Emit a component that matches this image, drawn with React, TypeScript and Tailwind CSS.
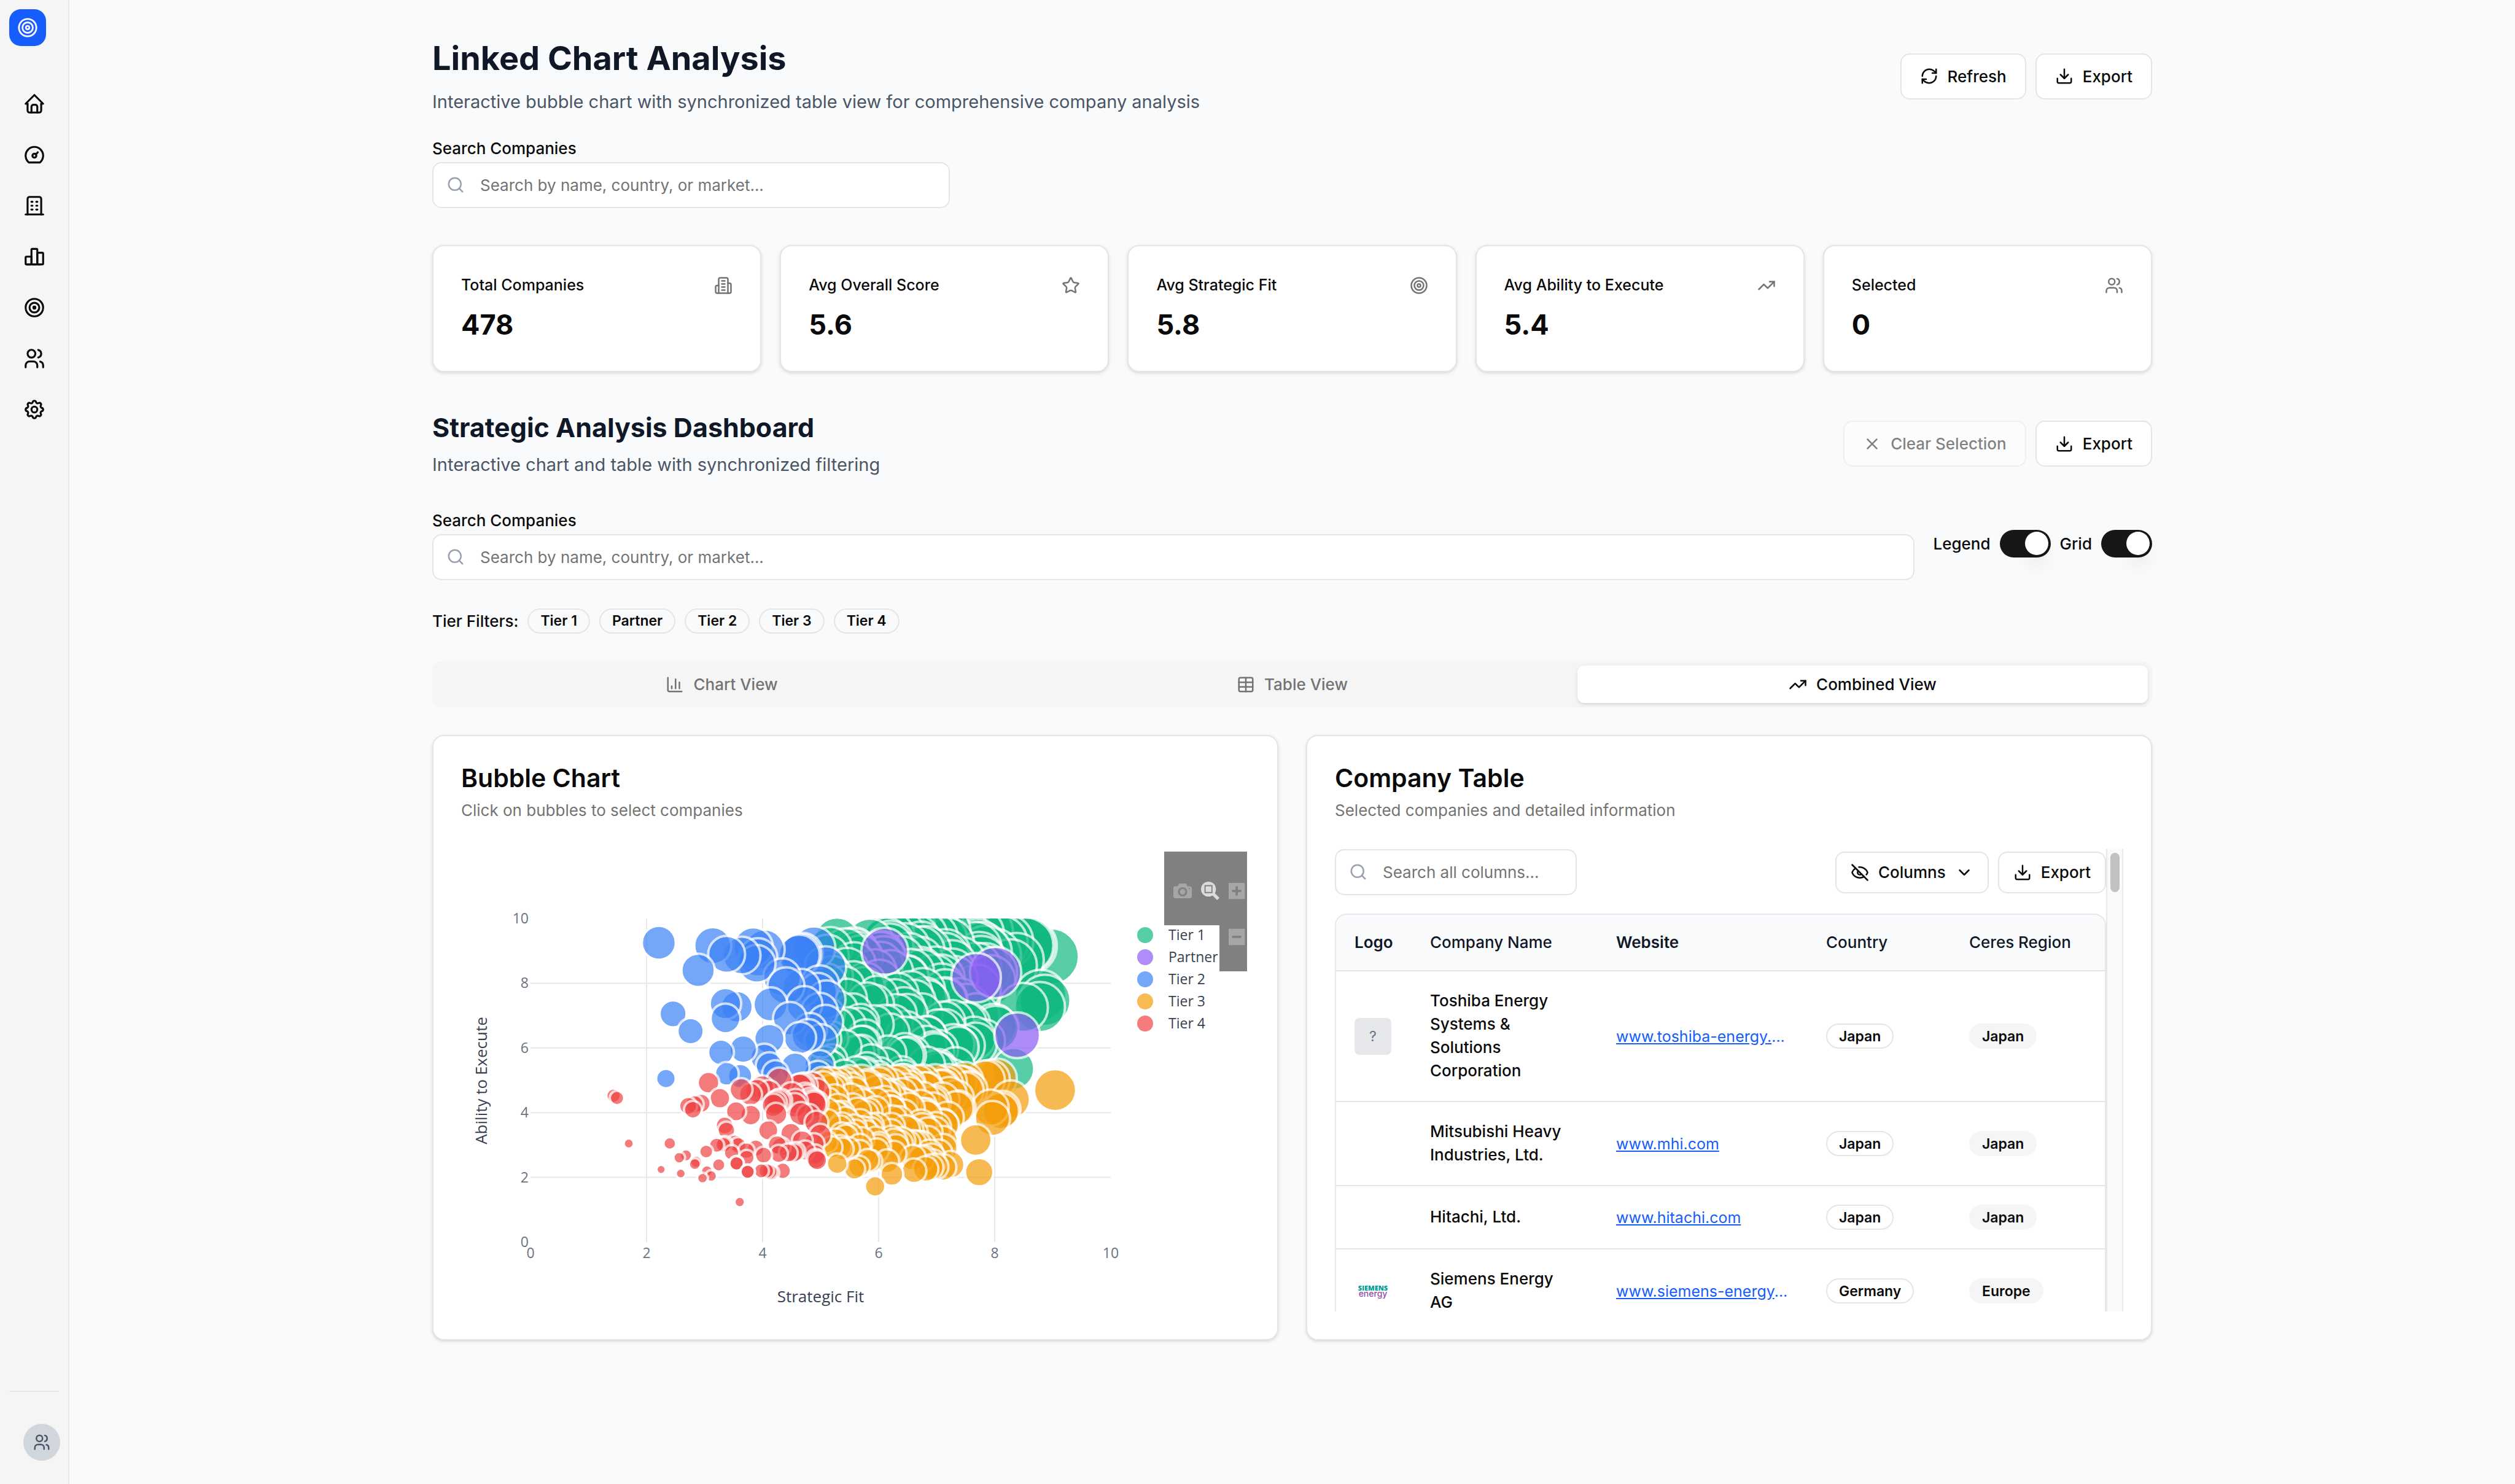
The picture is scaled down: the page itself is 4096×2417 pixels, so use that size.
import React from "react";
import {
  ChartColumn,
  ChevronDown,
  Download,
  EyeOff,
  RefreshCw,
  Search,
  Star,
  Table,
  Target,
  TrendingUp,
  Users,
  X,
} from "lucide-react";
import { TbBuilding, TbChartBar, TbDashboard, TbHome, TbSettings, TbTarget, TbUsers } from "react-icons/tb";

const NAV = [
  { label: "Home", Icon: TbHome },
  { label: "Dashboard", Icon: TbDashboard },
  { label: "Companies", Icon: TbBuilding },
  { label: "Reports", Icon: TbChartBar },
  { label: "Targets", Icon: TbTarget },
  { label: "Team", Icon: TbUsers },
  { label: "Settings", Icon: TbSettings },
];

function Sidebar() {
  return (
    <aside className="sticky top-0 flex h-screen w-[113px] shrink-0 flex-col border-r-2 border-[#e5e7eb] bg-[#f5f5f5] px-[15px] pt-[15px] pb-[38px]">
      <a href="#home" aria-label="Strategy workspace" className="flex size-[60px] items-center justify-center rounded-[19px] bg-[#155dfc] text-white">
        <Target size={34} />
      </a>
      <nav className="mt-[75px] flex flex-col gap-[45px] pl-[22px]">
        {NAV.map(({ label, Icon }) => (
          <a key={label} href={"#" + label.toLowerCase()} aria-label={label} className="flex size-[38px] text-[#0a0a0a]">
            <Icon size={38} />
          </a>
        ))}
      </nav>
      <div className="mt-auto border-t-2 border-[#e5e7eb] pt-[52px] pl-[23px]">
        <button type="button" aria-label="Account" className="flex size-[60px] items-center justify-center rounded-full bg-[#d1d5dc] text-[#4a5565]">
          <TbUsers size={30} />
        </button>
      </div>
    </aside>
  );
}

function OutlineButton({ children, small, disabled }: { children: React.ReactNode; small?: boolean; disabled?: boolean }) {
  return (
    <button
      type="button"
      disabled={disabled}
      className={
        (small ? "h-[68px] px-[23px] " : "h-[75px] px-[30px] ") +
        (disabled ? "opacity-50 " : "") +
        "flex items-center gap-[15px] rounded-[15px] border-2 border-[#e5e5e5] bg-white text-[26px] font-medium whitespace-nowrap text-[#0a0a0a]"
      }
    >
      {children}
    </button>
  );
}

function SearchInput({ id, placeholder, label }: { id: string; placeholder: string; label?: string }) {
  return (
    <div className="relative">
      <Search size={30} className="absolute top-[22px] left-[23px] text-[#99a1af]" />
      <input
        id={id}
        type="text"
        aria-label={label}
        placeholder={placeholder}
        className="h-[75px] w-full rounded-[15px] border-2 border-[#e5e5e5] bg-white pr-[23px] pl-[76px] text-[26px] text-[#0a0a0a] placeholder:text-[#737373]"
      />
    </div>
  );
}

function SearchField({ id, label, placeholder }: { id: string; label: string; placeholder: string }) {
  return (
    <div className="w-full">
      <label htmlFor={id} className="block text-[26px] leading-[45px] font-medium text-[#0a0a0a]">
        {label}
      </label>
      <SearchInput id={id} placeholder={placeholder} />
    </div>
  );
}

const CARD = "rounded-[19px] border-2 border-[#e5e5e5] bg-white shadow-[0_2px_6px_rgba(0,0,0,0.1),0_2px_4px_-2px_rgba(0,0,0,0.1)]";

function OfficeIcon({ size, className }: { size: number; className?: string }) {
  return (
    <svg
      width={size}
      height={size}
      viewBox="0 0 24 24"
      fill="none"
      stroke="currentColor"
      strokeWidth="2"
      strokeLinecap="round"
      strokeLinejoin="round"
      className={className}
      aria-hidden="true"
    >
      <path d="M6 22V4a2 2 0 0 1 2-2h8a2 2 0 0 1 2 2v18Z" />
      <path d="M6 12H4a2 2 0 0 0-2 2v6a2 2 0 0 0 2 2h2" />
      <path d="M18 9h2a2 2 0 0 1 2 2v9a2 2 0 0 1-2 2h-2" />
      <path d="M10 6h4M10 10h4M10 14h4M10 18h4" />
    </svg>
  );
}

const STATS = [
  { label: "Total Companies", value: "478", Icon: OfficeIcon },
  { label: "Avg Overall Score", value: "5.6", Icon: Star },
  { label: "Avg Strategic Fit", value: "5.8", Icon: Target },
  { label: "Avg Ability to Execute", value: "5.4", Icon: TrendingUp },
  { label: "Selected", value: "0", Icon: Users },
];

function Switch({ id, label }: { id: string; label: string }) {
  return (
    <div className="flex items-center gap-[15px]">
      <label htmlFor={id} className="text-[26px] font-medium text-[#0a0a0a]">
        {label}
      </label>
      <input
        id={id}
        type="checkbox"
        role="switch"
        defaultChecked
        className="flex h-[45px] w-[83px] appearance-none items-center justify-end rounded-full bg-[#171717] px-[4px] after:size-[38px] after:rounded-full after:bg-white after:shadow-[0_19px_28px_-6px_rgba(0,0,0,0.1),0_8px_11px_-8px_rgba(0,0,0,0.1)] after:content-['']"
      />
    </div>
  );
}

/* ---------- Bubble chart ---------- */

type Point = { x: number; y: number };

const UNIT = 1 / 3;
const SCALE = 16 / 17;
const PLOT = { left: 113, top: 113, width: 945, height: 527 };
const px = (fit: number) => PLOT.left + (fit / 10) * PLOT.width;
const py = (ability: number) => PLOT.top + PLOT.height - (ability / 10) * PLOT.height;

function scores(offset: number, list: string): Point[] {
  return list
    .trim()
    .split(/\s+/)
    .map((pair) => {
      const [a, b] = pair.split(",").map(Number);
      return { x: ((a + offset) * UNIT) / 100.4, y: 10 - ((b - 30) * UNIT) / 56 };
    });
}

function random(seed: number) {
  let a = seed;
  return () => {
    a = (a + 0x6d2b79f5) | 0;
    let t = Math.imul(a ^ (a >>> 15), 1 | a);
    t = (t + Math.imul(t ^ (t >>> 7), 61 | t)) ^ t;
    return ((t ^ (t >>> 14)) >>> 0) / 4294967296;
  };
}

// Bands: [yFrom, yTo, xFrom, xTo, count]
function spread(seed: number, bands: number[][]): string {
  const next = random(seed);
  const out: string[] = [];
  bands.forEach(([y0, y1, x0, x1, count]) => {
    for (let i = 0; i < count; i++) {
      const slot = Math.min(Math.max((i - 0.4 + next() * 1.8) / count, 0), 1);
      const x = x0 + slot * (x1 - x0);
      const y = y0 + next() * (y1 - y0);
      out.push(Math.round(x) + "," + Math.round(y));
    }
  });
  return out.join(" ");
}

const EAST = 1386;
const WEST = 336;

const TIER_1 = scores(
  EAST,
  `205,142 375,152 170,188 300,200 310,215 1314,227 1200,172 1190,168 1182,170 1138,245 1105,275 975,205 930,170 975,100 1080,150
   460,150 480,120 610,140 640,175 560,180 700,130 1284,455 1258,490 1172,492 1262,430 1120,810 1030,600 965,665 925,680 865,690 835,698
   560,742 735,820 730,805 320,590 400,580 660,450 670,640 345,840 350,832 720,300 1000,350 560,640 1020,590`,
).concat(
  scores(
    EAST,
    spread(11, [
      [20, 110, 500, 1120, 13],
      [110, 200, 420, 1080, 12],
      [190, 260, 150, 1040, 17],
      [260, 340, 150, 1010, 17],
      [340, 430, 150, 930, 15],
      [430, 520, 170, 900, 14],
      [520, 600, 150, 990, 14],
      [600, 690, 140, 940, 14],
      [690, 780, 140, 840, 14],
      [780, 860, 130, 850, 15],
    ]),
  ),
);

const PARTNER = scores(EAST, "453,200 1028,310 927,337 1140,636");

const TIER_2 = scores(
  WEST,
  `330,156 610,171 534,299 820,178 880,190 760,222 845,232 838,265 682,216 1135,182 1075,212 1066,216 1058,221 1195,282
   970,335 990,380 1070,390 1165,375 1155,412 1085,475 910,476 1165,510 1010,550 735,488 676,472 676,549 404,525 495,615
   1115,608 1105,638 1063,650 1172,665 904,655 768,708 653,725 878,752 904,795 936,835 1038,800 1165,792 1155,845 367,861
   683,836 752,848 1200,450 1195,570`,
);

const TIER_3 = scores(
  EAST,
  `1337,921 1107,970 1062,1020 1055,1030 1002,1012 1012,1068 925,1180 943,1347 403,1421 490,1358 605,1340 665,1330 690,1322 715,1318
   755,1322 795,1308 296,1330 320,1318 380,1290 365,1285 206,1303 835,1012 825,1015 1035,860 1000,865 975,868 565,920 575,905 380,1110
   285,1010 250,1075 190,910 170,915 300,1140 410,1235 530,1200 465,1290 500,1250`,
).concat(
  scores(
    EAST,
    spread(29, [
      [870, 900, 130, 900, 22],
      [895, 950, 130, 940, 20],
      [950, 1010, 130, 830, 18],
      [1010, 1070, 130, 790, 17],
      [1070, 1130, 130, 790, 17],
      [1130, 1190, 130, 780, 17],
      [1190, 1250, 130, 780, 16],
      [1250, 1310, 570, 780, 6],
    ]),
  ),
);

const TIER_4 = scores(
  WEST,
  `588,882 956,872 865,907 757,918 840,925 900,932 806,943 647,963 95,950 113,962 550,989 482,1003 515,995 507,1023 731,1031 807,1051
   1060,905 1085,900 1070,903 1125,897 1150,930 1020,945 1040,980 1100,960 1090,950 960,975 950,980 935,988 925,1000 1130,985 1145,990
   1135,995 1035,1000 1120,975 939,1045 1068,1045 1107,1055 1148,1090 672,1104 681,1130 898,1130 1016,1146 1075,1185 1168,1155 174,1198
   387,1198 471,1260 436,1272 524,1293 517,1305 576,1240 630,1207 665,1205 672,1200 725,1195 742,1208 708,1246 785,1235 786,1272
   833,1222 874,1259 641,1309 733,1300 734,1302 342,1333 444,1354 580,1342 602,1367 557,1378 791,1345 792,1344 862,1340 888,1340
   905,1345 915,1350 973,1340 750,1502 945,1205 965,1215 953,1252 1002,1247 1030,1247 1040,1240 1090,1235 1135,1200 1140,1255
   1152,1285 1145,1278`,
);

const TIERS = [
  { name: "Tier 1", color: "#10b981", points: TIER_1 },
  { name: "Partner", color: "#8b5cf6", points: PARTNER },
  { name: "Tier 2", color: "#3b82f6", points: TIER_2 },
  { name: "Tier 3", color: "#f59e0b", points: TIER_3 },
  { name: "Tier 4", color: "#ef4444", points: TIER_4 },
];

const bubbleRadius = (p: Point) => ((9.2 * (p.x + p.y) - 23) * UNIT + 2) * SCALE;

const CAMERA =
  "m500 450c-83 0-150-67-150-150 0-83 67-150 150-150 83 0 150 67 150 150 0 83-67 150-150 150z m400 150h-120c-16 0-34 13-39 29l-31 93c-6 15-23 28-40 28h-340c-16 0-34-13-39-28l-31-94c-6-15-23-28-40-28h-120c-55 0-100-45-100-100v-450c0-55 45-100 100-100h800c55 0 100 45 100 100v450c0 55-45 100-100 100z m-400-550c-138 0-250 112-250 250 0 138 112 250 250 250 138 0 250-112 250-250 0-138-112-250-250-250z m365 380c-19 0-35 16-35 35 0 19 16 35 35 35 19 0 35-16 35-35 0-19-16-35-35-35z";
const ZOOM_BOX =
  "m1000-25l-250 251c40 63 63 138 63 218 0 224-182 406-407 406-224 0-406-182-406-406s183-406 407-406c80 0 155 22 218 62l250-250 125 125z m-812 250l0 438 437 0 0-438-437 0z m62 375l313 0 0-312-313 0 0 312z";
const ZOOM_IN =
  "m1 787l0-875 875 0 0 875-875 0z m687-500l-187 0 0-187-125 0 0 187-188 0 0 125 188 0 0 187 125 0 0-187 187 0 0-125z";
const ZOOM_OUT = "m0 788l0-876 876 0 0 876-876 0z m688-500l-500 0 0 125 500 0 0-125z";

function ModeButton({ label, path, active }: { label: string; path: string; active?: boolean }) {
  return (
    <button type="button" aria-label={label} className="w-[45px] pl-[15px]">
      <svg viewBox="0 0 1000 1000" className="size-[30px]">
        <path d={path} transform="matrix(1 0 0 -1 0 850)" fill={active ? "#dcdcdc" : "#a6a6a6"} />
      </svg>
    </button>
  );
}

function BubbleChart() {
  const ticks = [0, 2, 4, 6, 8, 10];
  return (
    <div className="relative font-['Open_Sans',sans-serif]">
      <svg viewBox="0 0 1284 753" className="block w-full" role="img" aria-label="Strategic fit against ability to execute">
        <defs>
          <clipPath id="plot-area">
            <rect x={PLOT.left} y={PLOT.top} width={PLOT.width} height={PLOT.height} />
          </clipPath>
        </defs>
        <g stroke="#e5e7eb" strokeWidth="2">
          {[2, 4, 6, 8].map((t) => (
            <g key={t}>
              <line x1={px(t)} x2={px(t)} y1={PLOT.top} y2={PLOT.top + PLOT.height} />
              <line x1={PLOT.left} x2={PLOT.left + PLOT.width} y1={py(t)} y2={py(t)} />
            </g>
          ))}
        </g>
        <g clipPath="url(#plot-area)" stroke="#ffffff" strokeWidth="4">
          {TIERS.map((tier) => (
            <g key={tier.name} fill={tier.color}>
              {[...tier.points]
                .sort((a, b) => b.x + b.y - a.x - a.y)
                .map((p, i) => (
                  <circle key={i} cx={px(p.x)} cy={py(p.y)} r={bubbleRadius(p)} opacity="0.7" />
                ))}
            </g>
          ))}
        </g>
        <g fill="#6b7280" fontSize="23">
          {ticks.map((t) => (
            <text key={"y" + t} x={PLOT.left - 3} y={py(t) + 8} textAnchor="end">
              {t}
            </text>
          ))}
          {ticks.map((t) => (
            <text key={"x" + t} x={px(t)} y={666} textAnchor="middle">
              {t}
            </text>
          ))}
        </g>
        <g fill="#374151" fontSize="26" textAnchor="middle">
          <text x={PLOT.left + PLOT.width / 2} y={738}>
            Strategic Fit
          </text>
          <text transform="translate(42 377) rotate(-90)">Ability to Execute</text>
        </g>
        <g fontSize="23">
          {TIERS.map((tier, i) => (
            <g key={tier.name}>
              <circle cx={1114} cy={140 + i * 36} r={13} fill={tier.color} opacity="0.7" />
              <text x={1152} y={148 + i * 36} fill="#374151">
                {tier.name}
              </text>
            </g>
          ))}
        </g>
      </svg>
      <div className="absolute top-[4px] right-[4px] flex flex-col items-end" role="toolbar" aria-label="Chart tools">
        <div className="flex h-[120px] items-center bg-[#808080] pt-[8px]">
          <ModeButton label="Download plot" path={CAMERA} />
          <ModeButton label="Zoom" path={ZOOM_BOX} active />
          <ModeButton label="Zoom in" path={ZOOM_IN} />
        </div>
        <div className="h-[75px] bg-[#808080] pt-[4px]">
          <ModeButton label="Zoom out" path={ZOOM_OUT} />
        </div>
      </div>
    </div>
  );
}

/* ---------- Company table ---------- */

const COMPANIES = [
  { name: "Toshiba Energy Systems & Solutions Corporation", site: "www.toshiba-energy.", cut: true, country: "Japan", region: "Japan", logo: "unknown" },
  { name: "Mitsubishi Heavy Industries, Ltd.", site: "www.mhi.com", cut: false, country: "Japan", region: "Japan", logo: "" },
  { name: "Hitachi, Ltd.", site: "www.hitachi.com", cut: false, country: "Japan", region: "Japan", logo: "" },
  { name: "Siemens Energy AG", site: "www.siemens-energy", cut: true, country: "Germany", region: "Europe", logo: "siemens" },
];

function Logo({ kind }: { kind: string }) {
  if (kind === "unknown") {
    return <div className="flex size-[60px] items-center justify-center rounded-[8px] bg-[#e5e7eb] text-[23px] text-[#6a7282]">?</div>;
  }
  if (kind === "siemens") {
    return (
      <svg viewBox="0 0 60 30" className="block h-[30px] w-[60px]">
        <text x="30" y="14" textAnchor="middle" fontFamily="Open Sans" fontWeight="800" fontSize="11" fill="#009999">
          SIEMENS
        </text>
        <text x="30" y="24" textAnchor="middle" fontFamily="Inter" fontWeight="500" fontSize="14" fill="#8a4fa8">
          energy
        </text>
      </svg>
    );
  }
  return null;
}

const BADGE = "inline-flex h-[41px] items-center rounded-full border-2 px-[19px] text-[23px] font-semibold whitespace-nowrap text-[#0a0a0a]";

function CompanyTable() {
  return (
    <div className="flex h-[753px] overflow-hidden">
      <div className="min-w-0 flex-1">
        <div className="flex h-[75px] items-center justify-between">
          <div className="w-[394px]">
            <SearchInput id="table-search" label="Search all columns" placeholder="Search all columns..." />
          </div>
          <div className="flex gap-[15px]">
            <OutlineButton small>
              <EyeOff size={30} />
              Columns
              <ChevronDown size={30} />
            </OutlineButton>
            <OutlineButton small>
              <Download size={30} />
              Export
            </OutlineButton>
          </div>
        </div>
        <div className="mt-[30px] overflow-hidden rounded-[19px] border-2 border-[#e5e7eb]">
          <table className="w-full table-fixed text-left text-[26px] leading-[38px] text-[#0a0a0a]">
            <colgroup>
              <col className="w-[123px]" />
              <col className="w-[303px]" />
              <col className="w-[342px]" />
              <col className="w-[233px]" />
              <col />
            </colgroup>
            <thead>
              <tr className="h-[91px] border-b-2 border-[#e5e5e5] bg-[#f9fafb] text-[#101828]">
                <th className="px-[30px] font-semibold">Logo</th>
                <th className="px-[30px] font-medium">Company Name</th>
                <th className="px-[30px] font-semibold">Website</th>
                <th className="px-[30px] font-medium">Country</th>
                <th className="px-[30px] font-medium whitespace-nowrap">Ceres Region</th>
              </tr>
            </thead>
            <tbody>
              {COMPANIES.map((c) => (
                <tr key={c.name} className="border-b-2 border-[#e5e5e5]">
                  <td className="px-[30px]">
                    <Logo kind={c.logo} />
                  </td>
                  <td className="px-[30px] pt-[29px] pb-[30px] font-medium">{c.name}</td>
                  <td className="px-[30px] text-[25px] whitespace-nowrap text-[#155dfc]">
                    <a href={"https://" + c.site} className="underline">
                      {c.site}
                    </a>
                    {c.cut ? "..." : null}
                  </td>
                  <td className="px-[30px] align-middle">
                    <div className="flex">
                      <span className={BADGE + " border-[#e5e5e5]"}>{c.country}</span>
                    </div>
                  </td>
                  <td className="px-[30px] py-[30px]">
                    <div className="flex">
                      <span className={BADGE + " border-[#f5f5f5] bg-[#f5f5f5]"}>{c.region}</span>
                    </div>
                  </td>
                </tr>
              ))}
            </tbody>
          </table>
        </div>
      </div>
      <div className="flex w-[28px] shrink-0 justify-center border-x-2 border-[#e8e8e8] bg-[#fafafa] pt-[6px]">
        <div className="h-[64px] w-[15px] rounded-full bg-[#c1c1c1]" />
      </div>
    </div>
  );
}

function Panel({ title, note, children }: { title: string; note: string; children: React.ReactNode }) {
  return (
    <section className={CARD + " p-[45px]"}>
      <h3 className="text-[41px] leading-[47px] font-semibold text-[#0a0a0a]">{title}</h3>
      <p className="mt-[10px] mb-[44px] text-[26px] leading-[38px] text-[#737373]">{note}</p>
      {children}
    </section>
  );
}

const TABS = [
  { label: "Chart View", Icon: ChartColumn, active: false },
  { label: "Table View", Icon: Table, active: false },
  { label: "Combined View", Icon: TrendingUp, active: true },
];

export default function App() {
  return (
    <div className="flex min-h-screen bg-[#f9fafb] font-['Inter',sans-serif]">
      <Sidebar />
      <main className="min-w-0 flex-1">
        <div className="mx-auto max-w-[2891px] px-[45px] pt-[60px]">
          <header className="flex items-center justify-between">
            <div>
              <h1 className="text-[54px] leading-[70px] font-bold text-[#101828]">Linked Chart Analysis</h1>
              <p className="mt-[13px] text-[29px] leading-[45px] text-[#4a5565]">
                Interactive bubble chart with synchronized table view for comprehensive company analysis
              </p>
            </div>
            <div className="flex gap-[15px]">
              <OutlineButton>
                <RefreshCw size={30} />
                Refresh
              </OutlineButton>
              <OutlineButton>
                <Download size={30} />
                Export
              </OutlineButton>
            </div>
          </header>

          <div className="mt-[31px] max-w-[843px]">
            <SearchField id="page-search" label="Search Companies" placeholder="Search by name, country, or market..." />
          </div>

          <div className="mt-[60px] grid grid-cols-5 gap-[30px]">
            {STATS.map(({ label, value, Icon }) => (
              <div key={label} className={CARD + " p-[45px]"}>
                <div className="flex h-[38px] items-center justify-between">
                  <h3 className="text-[25px] font-medium text-[#0a0a0a]">{label}</h3>
                  <Icon size={30} className="text-[#737373]" />
                </div>
                <div className="mt-[15px] text-[45px] leading-[60px] font-bold text-[#0a0a0a]">{value}</div>
              </div>
            ))}
          </div>

          <div className="mt-[60px] flex items-center justify-between">
            <div>
              <h2 className="text-[43px] leading-[60px] font-bold text-[#101828]">Strategic Analysis Dashboard</h2>
              <p className="mt-[8px] text-[29px] leading-[45px] text-[#4a5565]">Interactive chart and table with synchronized filtering</p>
            </div>
            <div className="flex gap-[15px]">
              <OutlineButton disabled>
                <X size={30} />
                Clear Selection
              </OutlineButton>
              <OutlineButton>
                <Download size={30} />
                Export
              </OutlineButton>
            </div>
          </div>

          <div className="mt-[46px] flex items-center gap-[30px]">
            <SearchField id="dashboard-search" label="Search Companies" placeholder="Search by name, country, or market..." />
            <div className="flex items-center gap-[15px]">
              <Switch id="legend" label="Legend" />
              <Switch id="grid" label="Grid" />
            </div>
          </div>

          <div className="mt-[45px] flex h-[42px] items-center gap-[15px]">
            <span className="text-[26px] font-medium text-[#0a0a0a]">Tier Filters:</span>
            {TIERS.map((t) => (
              <button key={t.name} type="button" className={BADGE + " border-[#e5e5e5]"}>
                {t.name}
              </button>
            ))}
          </div>

          <div role="tablist" className="mt-[45px] grid h-[75px] grid-cols-3 rounded-[15px] bg-[#f5f5f5] p-[7px]">
            {TABS.map(({ label, Icon, active }) => (
              <button
                key={label}
                type="button"
                role="tab"
                aria-selected={active}
                className={
                  "flex items-center justify-center gap-[15px] rounded-[11px] text-[26px] font-medium " +
                  (active ? "bg-white text-[#0a0a0a] shadow-[0_2px_6px_rgba(0,0,0,0.1),0_2px_4px_-2px_rgba(0,0,0,0.1)]" : "text-[#737373]")
                }
              >
                <Icon size={30} />
                {label}
              </button>
            ))}
          </div>

          <div className="mt-[45px] grid grid-cols-2 gap-[45px]">
            <Panel title="Bubble Chart" note="Click on bubbles to select companies">
              <BubbleChart />
            </Panel>
            <Panel title="Company Table" note="Selected companies and detailed information">
              <CompanyTable />
            </Panel>
          </div>
        </div>
      </main>
    </div>
  );
}
